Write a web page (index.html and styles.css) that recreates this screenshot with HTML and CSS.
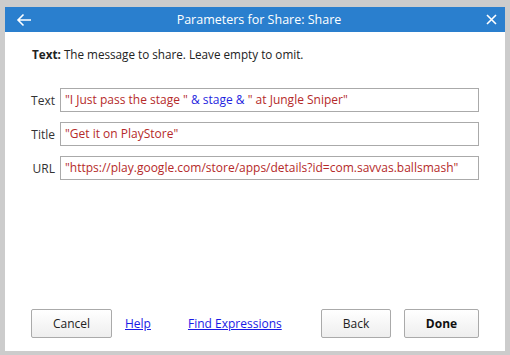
FILE: index.html
```html
<!DOCTYPE html>
<html lang="en">
<head>
  <meta charset="UTF-8">
  <title>Parameters for Share: Share</title>
  <link rel="stylesheet" href="styles.css">
</head>
<body>

<div class="dialog">
  <header class="dialog-header">
    <button class="icon-btn back-icon" aria-label="Back">
      <svg width="16" height="14" viewBox="0 0 16 14"><path d="M15 7H2M7.5 1.5L2 7l5.5 5.5" fill="none" stroke="#fff" stroke-width="1.6"/></svg>
    </button>
    <h1>Parameters for Share: Share</h1>
    <button class="icon-btn close-icon" aria-label="Close">
      <svg width="11" height="11" viewBox="0 0 11 11"><path d="M1 1l9 9M10 1l-9 9" fill="none" stroke="#fff" stroke-width="1.6"/></svg>
    </button>
  </header>

  <div class="dialog-body">
    <p class="description"><b>Text:</b> The message to share. Leave empty to omit.</p>

    <div class="params">
      <label>Text</label>
      <div class="expr"><span class="str">"I Just pass the stage "</span> <span class="op">&amp; stage &amp;</span> <span class="str">" at Jungle Sniper"</span></div>

      <label>Title</label>
      <div class="expr"><span class="str">"Get it on PlayStore"</span></div>

      <label>URL</label>
      <div class="expr"><span class="str">"https://play.google.com/store/apps/details?id=com.savvas.ballsmash"</span></div>
    </div>
  </div>

  <footer class="dialog-footer">
    <button class="btn">Cancel</button>
    <a href="#" class="link">Help</a>
    <a href="#" class="link link-wide">Find Expressions</a>
    <button class="btn btn-back">Back</button>
    <button class="btn btn-done">Done</button>
  </footer>
</div>

</body>
</html>
```

FILE: styles.css
```css
html, body {
  margin: 0;
  background: #cccccc;
  font-family: 'Open Sans', 'Noto Sans', Arial, sans-serif;
  font-size: 12px;
  color: #222;
}

.dialog {
  margin: 7px 5px 4px 5px;
  height: 344px;
  background: white;
  display: flex;
  flex-direction: column;
}

.dialog-header {
  height: 25px;
  background: #2a7fce;
  color: white;
  display: flex;
  align-items: center;
}

.dialog-header h1 {
  flex: 1;
  margin: 0;
  font-size: 12.5px;
  font-weight: normal;
  text-align: center;
}

.icon-btn {
  background: none;
  border: none;
  padding: 0;
  display: flex;
  align-items: center;
  justify-content: center;
  cursor: pointer;
}

.back-icon {
  width: 16px;
  margin-left: 11px;
}

.close-icon {
  width: 11px;
  margin-right: 8px;
}

.dialog-body {
  flex: 1;
}

.description {
  margin: 14px 0 0 27px;
  font-size: 11.7px;
}

.params {
  display: grid;
  grid-template-columns: 50px 419px;
  column-gap: 5px;
  row-gap: 10px;
  margin-top: 26px;
  align-items: center;
}

.params label {
  text-align: right;
  color: #333;
}

.expr {
  height: 22px;
  line-height: 22px;
  border: 1px solid #aaaaaa;
  padding: 0 4px;
  white-space: nowrap;
  overflow: hidden;
}

.str {
  color: #b52a2a;
}

.op {
  color: #1f1fe0;
}

.dialog-footer {
  display: flex;
  align-items: center;
  padding: 0 26px 13px 26px;
}

.btn {
  height: 29px;
  padding: 0;
  font-family: inherit;
  font-size: 12px;
  color: #222;
  background: linear-gradient(#ffffff, #eeeeee);
  border: 1px solid #aaaaaa;
  border-radius: 2px;
  width: 81px;
}

.btn-back {
  width: 70px;
  margin-left: auto;
}

.btn-done {
  width: 75px;
  margin-left: 13px;
  font-weight: bold;
  color: #111;
}

.link {
  color: #1a1ae6;
  text-decoration: underline;
  margin-left: 13px;
}

.link-wide {
  margin-left: 37px;
}
```
